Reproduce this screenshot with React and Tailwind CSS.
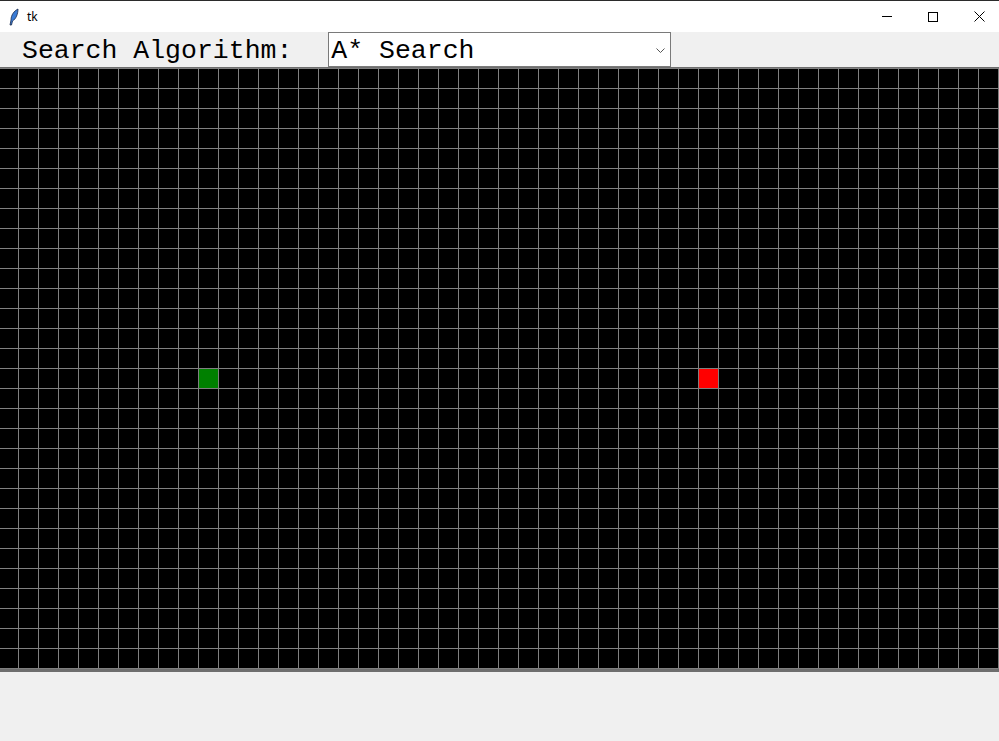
import React from 'react';

const COLS = 50;
const ROWS = 31;

const GridCanvas = () => {
  const vLines = Array.from({ length: COLS }, (_, i) => 18 + i * 20);
  const hLines = Array.from({ length: ROWS }, (_, i) => 1 + i * 20);

  return (
    <svg width="999" height="605" className="block">
      <rect x="0" y="0" width="999" height="605" fill="#000" />
      {hLines.map((y) => (
        <line key={'h' + y} x1="0" x2="999" y1={y + 0.5} y2={y + 0.5} stroke="#808080" strokeWidth="1" />
      ))}
      {vLines.map((x) => (
        <line key={'v' + x} x1={x + 0.5} x2={x + 0.5} y1="0" y2="605" stroke="#808080" strokeWidth="1" />
      ))}
      <rect x="0" y="0" width="999" height="1" fill="#6e6e6e" />
      <rect x="0" y="602" width="999" height="3" fill="#6e6e6e" />
      <rect x="199" y="302" width="19" height="19" fill="#008000" />
      <rect x="699" y="302" width="19" height="19" fill="#ff0000" />
    </svg>
  );
};

const TitleBar = () => (
  <div className="h-[32px] bg-white border-t border-[#2b2b2b] flex items-center relative">
    <svg width="12" height="18" viewBox="0 0 12 18" className="ml-[8px]">
      <path d="M10 1 C6 3 3 7 3 12 L2 17 L3.5 17 L4.5 13 C8 11 10 6 10 1 Z" fill="#3a7bd5" stroke="#1a2a4a" strokeWidth="0.8" />
    </svg>
    <span className="ml-[7px] text-[12px] text-black" style={{ fontFamily: '"Noto Sans", "Liberation Sans", sans-serif' }}>tk</span>
    <div className="ml-auto flex items-center h-full mr-[-3px]">
      <div className="w-[46px] h-full flex items-center justify-center">
        <div className="w-[10px] h-px bg-black" />
      </div>
      <div className="w-[46px] h-full flex items-center justify-center">
        <div className="w-[10px] h-[10px] border border-black" />
      </div>
      <div className="w-[46px] h-full flex items-center justify-center">
        <svg width="11" height="11" viewBox="0 0 11 11">
          <path d="M0.5 0.5 L10.5 10.5 M10.5 0.5 L0.5 10.5" stroke="#000" strokeWidth="1" />
        </svg>
      </div>
    </div>
  </div>
);

export default function App() {
  const mono = { fontFamily: '"Liberation Mono", "Courier New", monospace' };
  return (
    <div className="w-[999px] h-[741px] bg-[#f0f0f0] flex flex-col overflow-hidden">
      <TitleBar />
      <div className="h-[35px] flex items-center bg-[#f0f0f0]">
        <span className="ml-[22px] mt-[4px] text-[26.5px] leading-none text-black" style={mono}>
          Search Algorithm:
        </span>
        <div className="ml-[36px] w-[343px] h-[35px] bg-white border border-[#7a7a7a] flex items-center relative">
          <span className="ml-[2px] mt-[4px] text-[26.5px] leading-none text-black" style={mono}>A* Search</span>
          <svg width="9" height="6" viewBox="0 0 9 6" className="absolute right-[5px] top-[15px]">
            <path d="M0.5 0.5 L4.5 4.5 L8.5 0.5" fill="none" stroke="#555" strokeWidth="1" />
          </svg>
        </div>
      </div>
      <GridCanvas />
      <div className="flex-1 bg-[#f0f0f0]" />
    </div>
  );
}
